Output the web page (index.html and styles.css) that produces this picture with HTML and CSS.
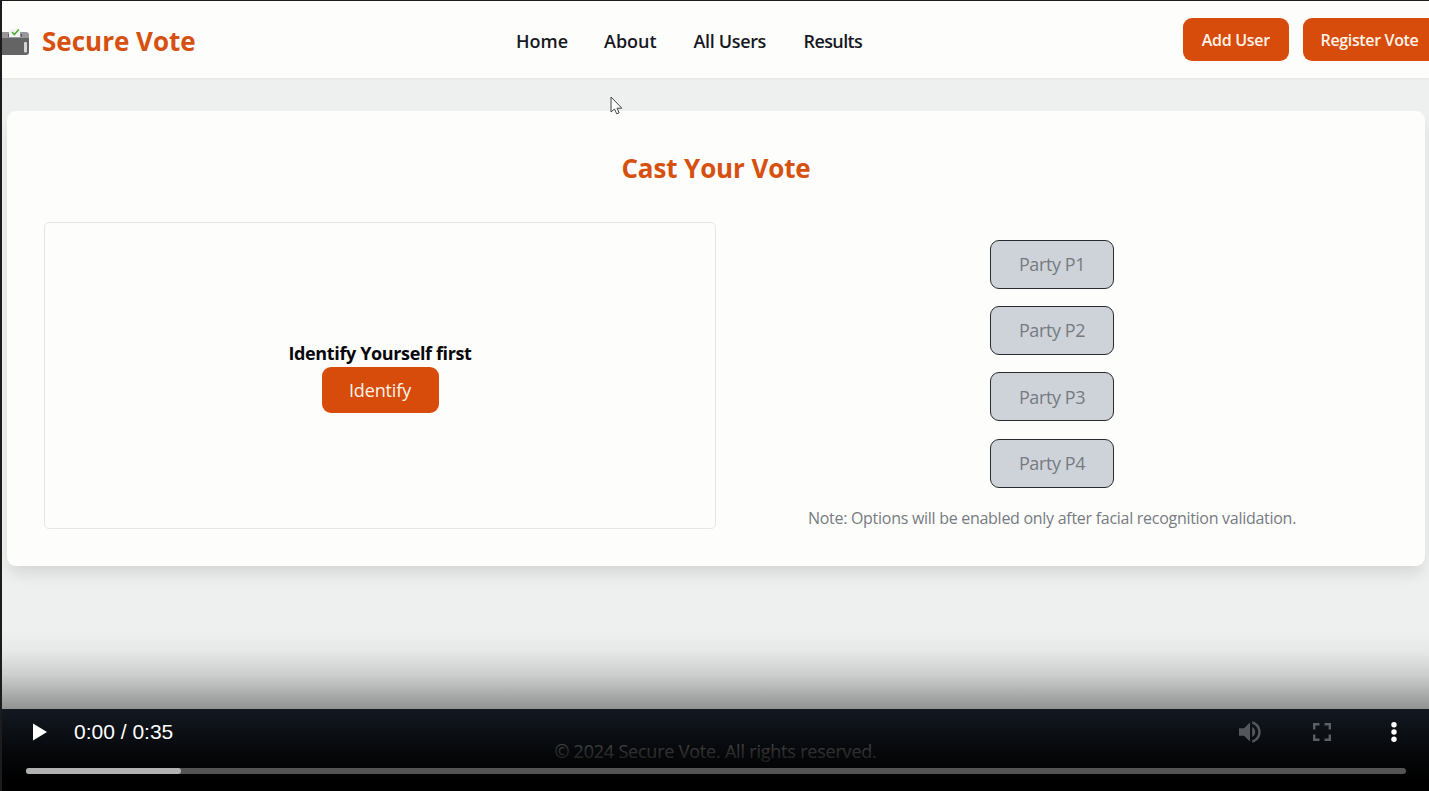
FILE: index.html
```html
<!DOCTYPE html>
<html lang="en">
<head>
<meta charset="utf-8">
<title>Secure Vote</title>
<link rel="stylesheet" href="styles.css">
</head>
<body>
<div class="player">
  <header class="header">
    <div class="brand">
      <svg class="logo" width="28" height="28" viewBox="0 0 28 28">
        <path d="M0 4h24q3 0 3 3v3H0z" fill="#979797"/>
        <path d="M0 10h27v14q0 3-3 3H0z" fill="#646464"/>
        <path d="M6 6h2v3H6zM18 6h2v3h-2z" fill="#55586a"/>
        <path d="M7 1.5 17.500 0 18.500 9H7z" fill="#f2f3f2"/>
        <path d="m10 4 2.300 2.500L16.800 1.500" fill="none" stroke="#4caf32" stroke-width="1.600"/>
        <rect x="22" y="14" width="3" height="10.500" rx="1" fill="#d5d5d5"/>
      </svg>
      <span class="brand-name">Secure Vote</span>
    </div>
    <nav class="nav">
      <a class="link home">Home</a><a class="link about">About</a><a class="link users">All Users</a><a class="link results">Results</a>
    </nav>
    <div class="actions">
      <button class="btn add"><span>Add User</span></button>
      <button class="btn register"><span>Register Vote</span></button>
    </div>
  </header>
  <main class="main">
    <section class="card">
      <h1 class="title">Cast Your Vote</h1>
      <div class="columns">
        <div class="identity">
          <p class="prompt">Identify Yourself first</p>
          <button class="btn identify">Identify</button>
        </div>
        <div class="options">
          <button class="party">Party P1</button>
          <button class="party">Party P2</button>
          <button class="party">Party P3</button>
          <button class="party">Party P4</button>
          <p class="note">Note: Options will be enabled only after facial recognition validation.</p>
        </div>
      </div>
    </section>
  </main>
  <footer class="footer"><span>© 2024 Secure Vote. All rights reserved.</span></footer>
  <div class="controls">
    <div class="control-row">
      <svg class="play" width="14" height="18" viewBox="0 0 14 18"><path d="M0 .5v17L14 9z" fill="#fff"/></svg>
      <span class="time">0:00 / 0:35</span>
      <svg class="volume" width="24" height="24" viewBox="0 0 24 24" fill="#55585b"><path d="M1 8.200v7.600h5L12 21.500V2.500L6 8.200zM14.200 7.100v9.800c1.900-.9 3-2.800 3-4.900s-1.100-4-3-4.900zM14.200 1.300v2.400c3.500 1 6 4.300 6 8.300s-2.500 7.300-6 8.300v2.400c4.900-1.100 8.500-5.500 8.500-10.700s-3.600-9.600-8.500-10.700z"/></svg>
      <svg class="full" width="18" height="18" viewBox="0 0 18 18" fill="none" stroke="#5d6062" stroke-width="2.400"><path d="M1.200 6.500V1.200h5.300M11.500 1.200h5.300v5.300M16.800 11.500v5.300h-5.300M6.500 16.800H1.200v-5.300"/></svg>
      <svg class="more" width="6" height="20" viewBox="0 0 6 20" fill="#fff"><circle cx="3" cy="2.700" r="2.700"/><circle cx="3" cy="10" r="2.700"/><circle cx="3" cy="17.300" r="2.700"/></svg>
    </div>
    <div class="track"><div class="buffered"></div></div>
  </div>
  <svg class="cursor" width="13" height="19" viewBox="0 0 13 19"><path d="M1 1v15l3.500-3 2.200 4.800 2.400-1L7 12.200h4.800z" fill="#fff" stroke="#444" stroke-width="1"/></svg>
</div>
</body>
</html>
```

FILE: styles.css
```css
* { box-sizing: border-box; }
body {
  margin: 0;
  height: 791px;
  padding: 1px 0 0 2px;
  overflow: hidden;
  background: #1c1c1e;
  font-family: "Open Sans", "Noto Sans", sans-serif;
}
button { margin: 0; padding: 0; border: 0; font-family: inherit; }
p, h1 { margin: 0; }
.player {
  position: relative;
  height: 790px;
  display: flex;
  flex-direction: column;
  overflow: hidden;
  background: #eef0f0;
}
.header {
  height: 77px;
  flex: none;
  display: flex;
  background: #fdfdfc;
  box-shadow: 0 1px 2px #e4e4e4;
}
.brand { width: 514px; display: flex; align-items: center; }
.logo { margin-right: 12px; margin-top: 4px; }
.brand-name {
  color: #d6500f;
  font-size: 26px;
  font-weight: 700;
  white-space: nowrap;
  margin-top: 2px;
}
.nav { flex: 1; display: flex; align-items: center; padding-top: 2px; }
.link { color: #17181f; font-size: 18px; font-weight: 600; white-space: nowrap; }
.home { width: 88px; }
.about { width: 89.500px; }
.users { width: 110px; letter-spacing: -.35px; }
.results { letter-spacing: -.6px; }
.actions {
  width: 246px;
  flex: none;
  display: flex;
  gap: 14px;
  padding-top: 17px;
}
.btn {
  background: #d84c0b;
  color: #fff3e8;
  border-radius: 9px;
  font-size: 16px;
  font-weight: 600;
  white-space: nowrap;
}
.add { width: 105.500px; height: 43px; flex: none; letter-spacing: -.3px; }
.register { width: 134px; height: 43px; flex: none; letter-spacing: -.35px; }
.main { flex: 1; padding: 33px 4px 0 5px; }
.card {
  height: 455px;
  padding: 37px;
  border-radius: 9px;
  background: #fdfdfc;
  box-shadow: 0 10px 16px -3px rgba(0, 0, 0, .11);
}
.title {
  height: 74px;
  line-height: 40px;
  text-align: center;
  color: #d6500f;
  font-size: 26px;
  font-weight: 700;
  letter-spacing: -.12px;
}
.columns { display: grid; grid-template: 307px / 1fr 1fr; }
.identity {
  display: flex;
  flex-direction: column;
  align-items: center;
  padding-top: 119px;
  border: 1px solid #e4e6e7;
  border-radius: 5px;
}
.prompt { height: 25px; line-height: 23px; font-size: 18px; font-weight: 700; color: #08080c; letter-spacing: -.37px; }
.identify { width: 117px; height: 46px; flex: none; font-size: 18px; font-weight: 500; letter-spacing: -.15px; }
.options { display: flex; flex-direction: column; align-items: center; padding-top: 17.500px; }
.party {
  width: 124px;
  height: 49px;
  flex: none;
  margin-bottom: 17.400px;
  border: 1px solid #2a2b2e;
  border-radius: 9px;
  background: #ced3da;
  color: #777b80;
  font-size: 18px;
  letter-spacing: -.4px;
}
.note { line-height: 27px; color: #777b82; font-size: 16px; white-space: nowrap; letter-spacing: -.28px; }
.footer {
  height: 82px;
  flex: none;
  padding-top: 30px;
  text-align: center;
  background: #1f2937;
  color: #fff;
  font-size: 18px;
  line-height: 25px;
  letter-spacing: -.21px;
}
.controls {
  position: absolute;
  inset: auto 0 0;
  height: 160px;
  padding: 80px 23px 0 24px;
  background: linear-gradient(transparent 0, rgba(0,0,0,.03) 20px, rgba(0,0,0,.14) 44px, rgba(0,0,0,.4) 79px, rgba(0,0,0,.66) 105px, rgba(0,0,0,.82) 121px, #000 150px);
}
.control-row { height: 42px; display: flex; align-items: center; color: #fff; padding-left: 7px; }
.time {
  margin-left: 27px;
  font: 21px "Liberation Sans", sans-serif;
}
.volume { margin-left: auto; }
.full { margin-left: 51px; }
.more { margin: 0 9px 0 60px; }
.track { height: 6px; margin-top: 15px; border-radius: 3px; background: #545454; }
.buffered { width: 155px; height: 6px; border-radius: 3px; background: #b1b1b1; }
.cursor { position: absolute; left: 608px; top: 95px; }
```
